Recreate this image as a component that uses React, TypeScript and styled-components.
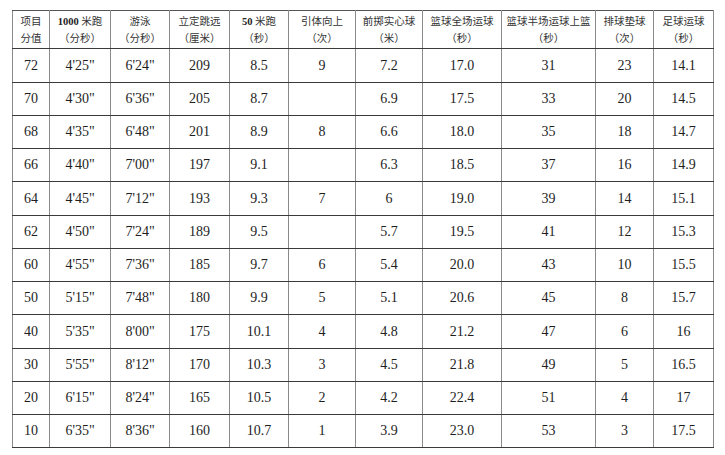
import styled, { createGlobalStyle } from "styled-components";

const GlobalStyle = createGlobalStyle`
  html, body {
    margin: 0;
    padding: 0;
    background: #ffffff;
  }
`;

type Column = {
  num?: string;
  title: string;
  unit: string;
  width: number;
};

const columns: Array<Column> = [
  { title: "项目", unit: "分值", width: 37 },
  { num: "1000", title: " 米跑", unit: "（分秒）", width: 61 },
  { title: "游泳", unit: "（分秒）", width: 59 },
  { title: "立定跳远", unit: "（厘米）", width: 60 },
  { num: "50", title: " 米跑", unit: "（秒）", width: 59 },
  { title: "引体向上", unit: "（次）", width: 67 },
  { title: "前掷实心球", unit: "（米）", width: 67 },
  { title: "篮球全场运球", unit: "（秒）", width: 79 },
  { title: "篮球半场运球上篮", unit: "（秒）", width: 94 },
  { title: "排球垫球", unit: "（次）", width: 58 },
  { title: "足球运球", unit: "（秒）", width: 60 },
];

const rows: Array<Array<string>> = [
  ["72", "4'25\"", "6'24\"", "209", "8.5", "9", "7.2", "17.0", "31", "23", "14.1"],
  ["70", "4'30\"", "6'36\"", "205", "8.7", "", "6.9", "17.5", "33", "20", "14.5"],
  ["68", "4'35\"", "6'48\"", "201", "8.9", "8", "6.6", "18.0", "35", "18", "14.7"],
  ["66", "4'40\"", "7'00\"", "197", "9.1", "", "6.3", "18.5", "37", "16", "14.9"],
  ["64", "4'45\"", "7'12\"", "193", "9.3", "7", "6", "19.0", "39", "14", "15.1"],
  ["62", "4'50\"", "7'24\"", "189", "9.5", "", "5.7", "19.5", "41", "12", "15.3"],
  ["60", "4'55\"", "7'36\"", "185", "9.7", "6", "5.4", "20.0", "43", "10", "15.5"],
  ["50", "5'15\"", "7'48\"", "180", "9.9", "5", "5.1", "20.6", "45", "8", "15.7"],
  ["40", "5'35\"", "8'00\"", "175", "10.1", "4", "4.8", "21.2", "47", "6", "16"],
  ["30", "5'55\"", "8'12\"", "170", "10.3", "3", "4.5", "21.8", "49", "5", "16.5"],
  ["20", "6'15\"", "8'24\"", "165", "10.5", "2", "4.2", "22.4", "51", "4", "17"],
  ["10", "6'35\"", "8'36\"", "160", "10.7", "1", "3.9", "23.0", "53", "3", "17.5"],
];

export default function App() {
  return (
    <>
      <GlobalStyle />
      <Page>
        <ScoreTable>
          <colgroup>
            {columns.map((col, i) => (
              <col key={i} style={{ width: col.width }} />
            ))}
          </colgroup>
          <thead>
            <tr>
              {columns.map((col, i) => (
                <HeadCell key={i}>
                  <HeadLine>
                    {col.num && <HeadNum>{col.num}</HeadNum>}
                    {col.title}
                  </HeadLine>
                  <HeadLine>{col.unit}</HeadLine>
                </HeadCell>
              ))}
            </tr>
          </thead>
          <tbody>
            {rows.map((row, i) => (
              <BodyRow key={row[0]} $tall={i % 4 === 0}>
                {row.map((value, j) => (
                  <Cell key={j}>{value}</Cell>
                ))}
              </BodyRow>
            ))}
          </tbody>
        </ScoreTable>
      </Page>
    </>
  );
}

const Page = styled.div`
  width: 725px;
  height: 455px;
  padding: 10px 0 0 12px;
  box-sizing: border-box;
  background: #ffffff;
`;

const ScoreTable = styled.table`
  width: 701px;
  table-layout: fixed;
  border-collapse: collapse;
  color: #1e1e1e;
`;

const HeadCell = styled.th`
  height: 37px;
  padding: 0;
  border-top: 1px solid #555555;
  border-bottom: 1px solid #3a3a3a;
  border-left: 1px solid #8a8a8a;
  border-right: 1px solid #8a8a8a;
  text-align: center;
  vertical-align: middle;
  font-family: "Liberation Serif", "Noto Sans CJK SC", serif;
  font-size: 10.5px;
  font-weight: 400;
  color: #333333;
`;

const HeadLine = styled.div`
  line-height: 17px;
  white-space: nowrap;
`;

const HeadNum = styled.span`
  font-weight: 700;
  color: #222222;
`;

const BodyRow = styled.tr<{ $tall: boolean }>`
  height: ${(p) => (p.$tall ? 34 : 33)}px;
`;

const Cell = styled.td`
  padding: 0;
  border-bottom: 1px solid #3a3a3a;
  border-left: 1px solid #8a8a8a;
  border-right: 1px solid #8a8a8a;
  text-align: center;
  vertical-align: middle;
  font-family: "Liberation Serif", "Times New Roman", serif;
  font-size: 14px;
  color: #1e1e1e;
`;
